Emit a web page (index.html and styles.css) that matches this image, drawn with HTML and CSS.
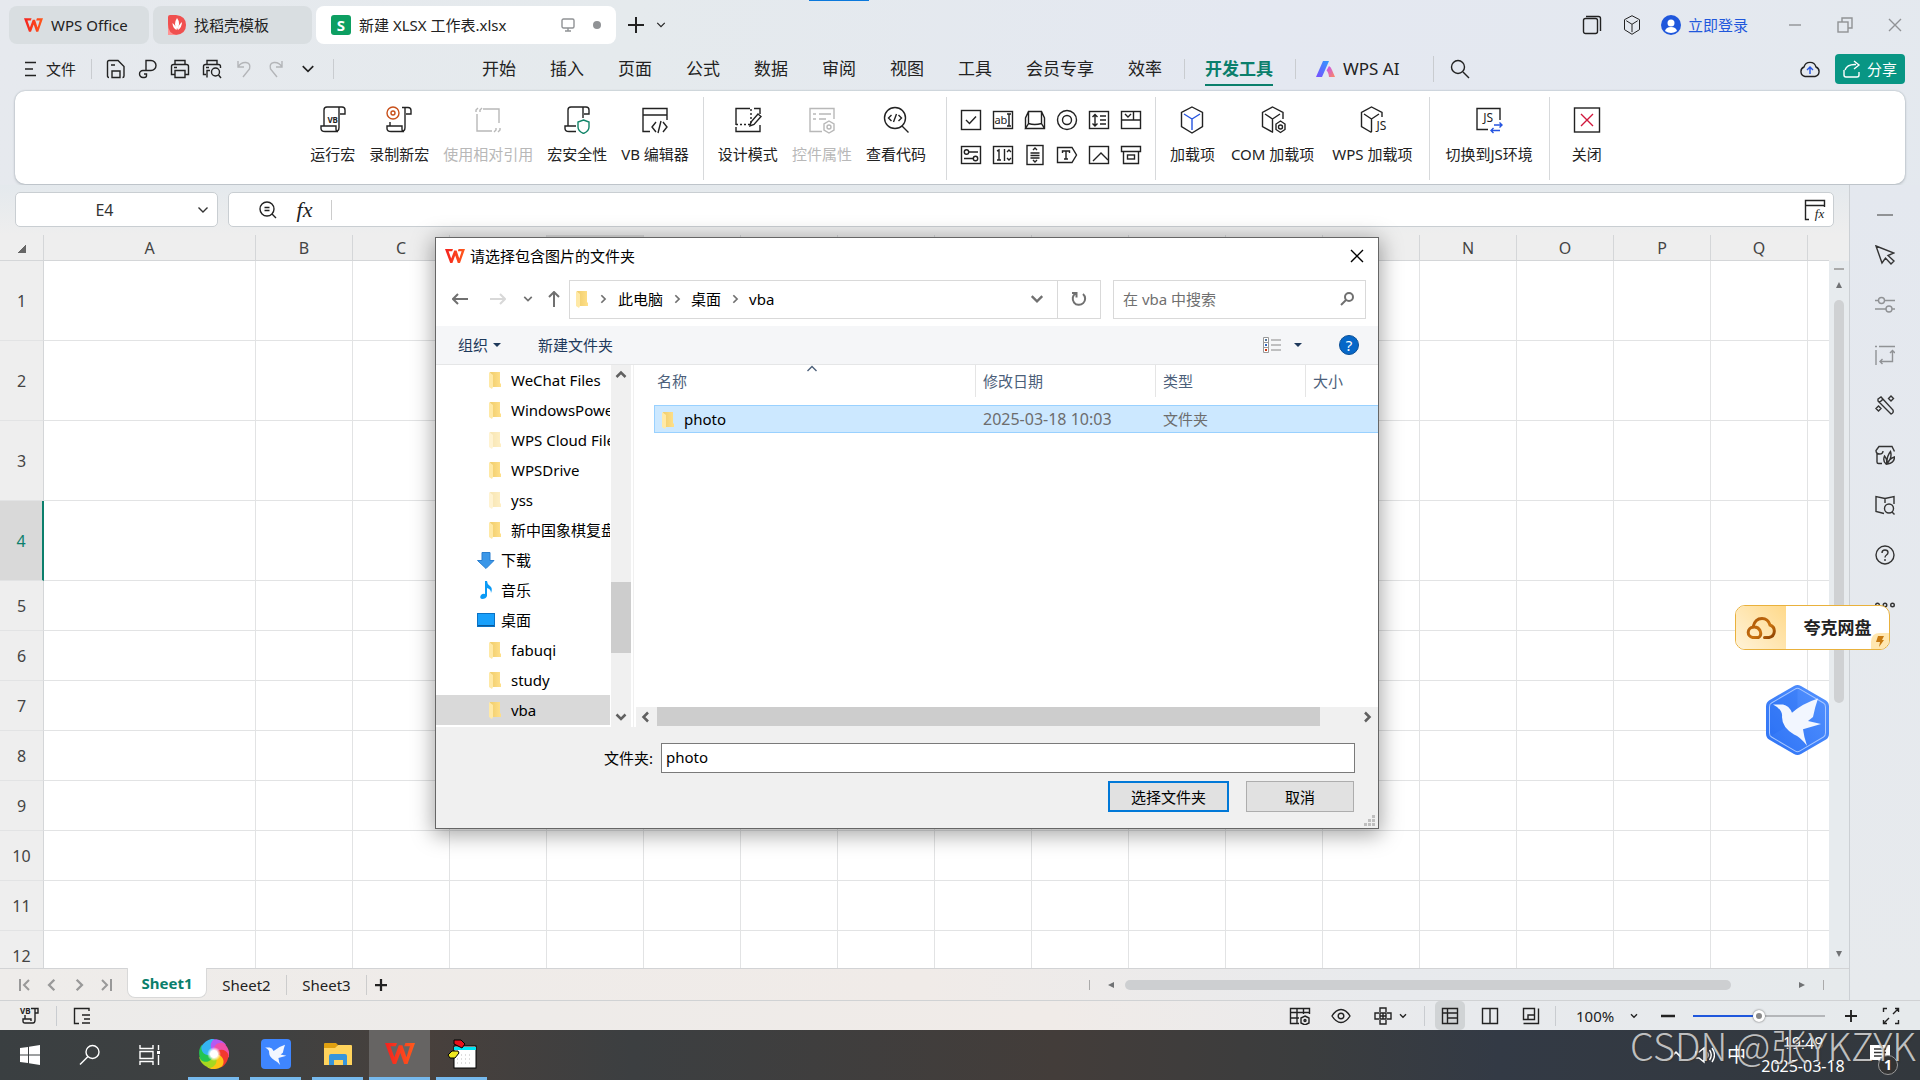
FILE: index.html
```html
<!DOCTYPE html>
<html lang="zh-CN">
	<head>
		<meta charset="UTF-8">
		<title>新建 XLSX 工作表.xlsx - WPS Office</title>
		<link rel="stylesheet" href="styles.css">
	</head>
	<body>
		<!-- 图标库 -->
		<svg class="sprite" aria-hidden="true">
			<defs>
				<linearGradient id="g-wps" x1="0" x2="1"><stop offset="0" stop-color="#f4211f"/><stop offset="1" stop-color="#ff5a1c"/></linearGradient>
				<linearGradient id="g-folder" x1="0" x2="1"><stop offset="0" stop-color="#f0cd6c"/><stop offset="1" stop-color="#ffe08a"/></linearGradient>
				<linearGradient id="g-ai" x1="0" y1="1" x2="1" y2="0"><stop offset="0" stop-color="#7a4dff"/><stop offset="1" stop-color="#2f9bff"/></linearGradient>
				<linearGradient id="g-ai2" x1="0" y1="0" x2="1" y2="1"><stop offset="0" stop-color="#c04dff"/><stop offset="1" stop-color="#ff8a5c"/></linearGradient>
				<linearGradient id="g-hex" x1="0" y1="1" x2="1" y2="0"><stop offset="0" stop-color="#2c72f5"/><stop offset="1" stop-color="#5593ff"/></linearGradient>
				<linearGradient id="g-cloud" x1="0" y1="0" x2="1" y2="1"><stop offset="0" stop-color="#a85206"/><stop offset=".6" stop-color="#c9720f"/><stop offset="1" stop-color="#8a3f00"/></linearGradient>
				<radialGradient id="g-core"><stop offset=".5" stop-color="#fff"/><stop offset="1" stop-color="#fff" stop-opacity="0"/></radialGradient>
				<path id="petal" d="M15 15C8 12 7 4 13 .5 19-.5 25 2 27 6 21 4 17 8 15 15z"/>
			</defs>
			<symbol id="i-wps" viewBox="0 0 20 14"><path d="M0 0h8l-.8 2.200H3.600L6.200 9.500 9.200 1.500h2.400l2.700 8L16.600 2.200h-3.800L13.600 0H20l-5 14h-2.200L10.200 6.600 7.400 14H5.200z" fill="url(#g-wps)"/></symbol>
			<symbol id="i-folder" viewBox="0 0 12 17"><path d="M1 0h10v11l1 1v3H4z" fill="url(#g-folder)"/><path d="M0 0l4 3v12l-1 2-3-2z" fill="#ffe9a6"/></symbol>
			<symbol id="i-chev" viewBox="0 0 12 12"><path d="M1.500 3.500L6 8l4.500-4.500"/></symbol>
			<symbol id="i-left" viewBox="0 0 12 12"><path d="M8 1.500L3.500 6 8 10.500"/></symbol>
			<symbol id="i-right" viewBox="0 0 12 12"><path d="M4 1.500L8.500 6 4 10.500"/></symbol>
			<symbol id="i-up" viewBox="0 0 12 12"><path d="M1.500 8L6 3.500 10.500 8"/></symbol>
			<symbol id="i-x" viewBox="0 0 14 14"><path d="M1 1l12 12M13 1L1 13"/></symbol>
			<symbol id="i-plus" viewBox="0 0 16 16"><path d="M8 0v16M0 8h16"/></symbol>
			<symbol id="i-cube" viewBox="0 0 24 28"><path d="M12 1l10.500 5.500v14L12 27 1.500 20.500v-14z"/><path class="inner" d="M4 8l8 5 8-5M12 13v11"/></symbol>
			<symbol id="i-scroll" viewBox="0 0 28 28"><path d="M5 20V4q0-3 3-3h15q3 0 3 3v4h-5M20 1.500v20q0 4-4 4H6q-4 0-4-3V20h15v3q0 3 2 2.500"/></symbol>
			<symbol id="i-bird" viewBox="0 0 63 68"><path d="M7 19l10 0q6 1 9 8Q36 18 52 13q-3 8-5 18l-5 4 13 3-18 5q1 8 4 16Q34 50 28 48 16 41 16 31q1-7-9-12z" fill="#f2f6ff"/></symbol>
		</svg>

		<div class="glow"></div>
		<header class="titlebar">
			<button class="doc"><svg width="19" height="14"><use href="#i-wps"/></svg>WPS Office</button>
			<button class="doc docer">
				<svg width="18" height="20" viewBox="0 0 18 20"><path d="M0 2q0-2 2-2h6q10 1 10 10T8 20H0z" fill="#f0504f"/><path d="M0 20V9q0 10 9 11z" fill="#ff9494"/><path d="M9 3q4 5 0 12-4-6 0-12zM4.500 8q3 2 4 7-4-2-4-7zM14 7q0 5-4 8 0-5 4-8z" fill="#fff"/></svg>
				找稻壳模板
			</button>
			<div class="doc current">
				<span class="s-logo">S</span>
				<span class="docname">新建 XLSX 工作表.xlsx</span>
				<svg class="ico faint" width="14" height="14" viewBox="0 0 14 14"><rect x="1" y="1" width="12" height="9" rx="1.500"/><path d="M7 10v3M4 13h6"/></svg>
				<i class="dot"></i>
			</div>
			<button class="bare add" aria-label="新建"><svg class="ico bold" width="16" height="16"><use href="#i-plus"/></svg></button>
			<button class="bare" aria-label="标签列表"><svg class="ico" width="10" height="10"><use href="#i-chev"/></svg></button>
			<div class="winctl">
				<button class="bare" aria-label="工作区"><svg class="ico" width="20" height="20" viewBox="0 0 20 20"><rect x="1.500" y="3.500" width="14" height="15" rx="2"/><path d="M4 1.500h12.500q2 0 2 2V16"/></svg></button>
				<button class="bare" aria-label="应用"><svg class="ico" width="18" height="20"><use href="#i-cube"/></svg></button>
				<button class="bare login">
					<svg width="20" height="20" viewBox="0 0 20 20"><circle cx="10" cy="10" r="10" fill="#1f57dc"/><circle cx="10" cy="8" r="3.500" fill="#fff"/><path d="M4 16q1-4 6-4t6 4q-3 2-6 2t-6-2z" fill="#fff"/></svg>
					立即登录
				</button>
				<button class="bare faint" aria-label="最小化"><svg class="ico" width="14" height="14" viewBox="0 0 14 14"><path d="M1 7h12"/></svg></button>
				<button class="bare faint" aria-label="还原"><svg class="ico" width="16" height="16" viewBox="0 0 16 16"><rect x="1" y="5" width="10" height="10"/><path d="M5 5V1h10v10h-4"/></svg></button>
				<button class="bare faint" aria-label="关闭窗口"><svg class="ico" width="14" height="14"><use href="#i-x"/></svg></button>
			</div>
		</header>

		<div class="menubar">
			<div class="quick">
				<button class="bare file"><svg class="ico" width="12" height="16" viewBox="0 0 12 16"><path d="M1 1.500h11M1 8h8M1 14.500h11"/></svg>文件</button>
				<i class="sep"></i>
				<button class="bare" aria-label="保存"><svg class="ico" width="20" height="20" viewBox="0 0 20 20"><path d="M3 18.500q-1.500 0-1.500-1.500V3q0-1.500 1.500-1.500h9l6 6V17q0 1.500-1.500 1.500M6 18.500V12h8v6.500zM5 6h4"/></svg></button>
				<button class="bare" aria-label="导出"><svg class="ico" width="20" height="20" viewBox="0 0 20 20"><path d="M8 12V1.500h5a5 5 0 010 10H5a3.200 3.200 0 000 7h1.500q2 0 2-2v-1.500H6"/></svg></button>
				<button class="bare" aria-label="打印"><svg class="ico" width="20" height="20" viewBox="0 0 20 20"><path d="M5 5.500v-4h10v4M4.500 15.500H1.500v-8q0-2 2-2h13q2 0 2 2v8h-3M5 11.500h10v7H5zM4 8.500h3"/></svg></button>
				<button class="bare" aria-label="打印预览"><svg class="ico" width="20" height="20" viewBox="0 0 20 20"><path d="M5 5.500v-4h10v4M4 15.500H1.500v-8q0-2 2-2h13q2 0 2 2V9M5 18.500v-7h3M4 8.500h3"/><circle cx="13.500" cy="13" r="4"/><path d="M16.500 16l2.500 3"/></svg></button>
				<button class="bare off" aria-label="撤销"><svg class="ico" width="20" height="20" viewBox="0 0 20 20"><path d="M4 2v6h6M4 8q3-5 8-4.500T15.500 10L9 18"/></svg></button>
				<button class="bare off" aria-label="恢复"><svg class="ico" width="20" height="20" viewBox="0 0 20 20"><path d="M16 2v6h-6M16 8q-3-5-8-4.500T4.500 10l6.500 8"/></svg></button>
				<button class="bare" aria-label="更多"><svg class="ico" width="14" height="14"><use href="#i-chev"/></svg></button>
				<i class="sep"></i>
			</div>
			<nav class="menus">
				<a href="#">开始</a><a href="#">插入</a><a href="#">页面</a><a href="#">公式</a><a href="#">数据</a><a href="#">审阅</a><a href="#">视图</a><a href="#">工具</a><a href="#">会员专享</a><a href="#">效率</a>
				<i class="sep"></i>
				<a href="#" class="on">开发工具</a>
				<i class="sep"></i>
				<a href="#" class="ai"><svg width="20" height="16" viewBox="0 0 20 16"><path d="M7 0h6L6 16H0z" fill="url(#g-ai)"/><path d="M13 5q2 1 3 4l3 7h-6q-.5-5-2.500-6.500z" fill="url(#g-ai2)"/></svg>WPS AI</a>
				<i class="sep tall"></i>
				<button class="bare" aria-label="搜索"><svg class="ico" width="20" height="20" viewBox="0 0 20 20"><circle cx="8" cy="8" r="6.500"/><path d="M13 13l6 6"/></svg></button>
			</nav>
			<button class="bare cloud" aria-label="云同步"><svg class="ico" width="20" height="20" viewBox="0 0 20 20"><path d="M5 17.500a5 5 0 01-1-9.500 6.200 6.200 0 0112 0 5 5 0 01-1 9.500z"/><path d="M10 15V8.500M7 11l3-3 3 3" stroke="#2554e0"/></svg></button>
			<button class="share"><svg class="ico" width="18" height="18" viewBox="0 0 18 18"><path d="M1 10v5q0 2 2 2h11q2 0 2-2v-3M2 10q2-6 11-5.500M11 1l5 4-5 4"/></svg>分享</button>
		</div>

		<div class="ribbon">
			<button class="tool"><span class="pic"><svg class="ico" width="28" height="28"><use href="#i-scroll"/></svg><b>VB</b></span>运行宏</button>
			<button class="tool"><svg class="ico" width="28" height="28" viewBox="0 0 28 28"><circle cx="8" cy="7" r="6" stroke="#c8501a"/><circle cx="8" cy="7" r="2" stroke="#c8501a"/><path d="M17 1.500h6q3 0 3 3V8h-5M20 1.500v20q0 4-4 4H6q-4 0-4-3V20h15v3q0 3 2 2.500M5 16v4"/></svg>录制新宏</button>
			<button class="tool" disabled><svg class="ico" width="28" height="28" viewBox="0 0 28 28"><path d="M9 3h16v14M3 8v17h15M2 6V4l2-2M6 6V4l2-2M22 22v2l-2 2M26 22v2l-2 2"/></svg>使用相对引用</button>
			<button class="tool"><svg class="ico" width="28" height="28" viewBox="0 0 28 28"><path d="M5 20V4q0-3 3-3h15q3 0 3 3v4h-5M20 1.500V12M13 25.500H6q-4 0-4-3V20h11"/><path d="M20.500 14l5.500 2v5q0 4-5.500 6.500Q15 25 15 21v-5z" stroke="#128569"/></svg>宏安全性</button>
			<button class="tool"><svg class="ico" width="28" height="28" viewBox="0 0 28 28"><path d="M9 25.500H2V2.500h24V14M2 9h24M15 16l-4 5 4 5M22 16l4 5-4 5M20 15l-3 12"/></svg>VB 编辑器</button>
			<i class="rule"></i>
			<button class="tool"><svg class="ico" width="28" height="28" viewBox="0 0 28 28"><path d="M2 19V2.500h14M20 2.500h6V8M2 21v4.500h24V19"/><path d="M17 3v16M2 18.500h14" stroke-dasharray="2 2"/><path d="M24 8l3 2.500-7 8-4 1.500 1-4z"/></svg>设计模式</button>
			<button class="tool" disabled><svg class="ico" width="28" height="28" viewBox="0 0 28 28"><path d="M14 25.500H2V2.500h24V13M5 8h3M11 8h12M5 13h3M11 13h7"/><path d="M21 15l5 3v6l-5 3-5-3v-6z"/><circle cx="21" cy="21" r="2"/></svg>控件属性</button>
			<button class="tool"><svg class="ico" width="28" height="28" viewBox="0 0 28 28"><circle cx="13" cy="12" r="10.500"/><path d="M20 20l6.500 6.500M9.500 9l-3 3 3 3M16.500 9l3 3-3 3M14.500 8l-3 8"/></svg>查看代码</button>
			<i class="rule apart"></i>
			<div class="controls">
				<button class="bare" aria-label="复选框"><svg class="ico" width="22" height="22" viewBox="0 0 22 22"><rect x="1.500" y="1.500" width="19" height="19"/><path d="M6 11l3.500 3.500L16 7.500"/></svg></button>
				<button class="bare" aria-label="文本框"><span class="pic small"><svg class="ico" width="22" height="22" viewBox="0 0 22 22"><rect x="1.500" y="2.500" width="19" height="17"/><path d="M15 5h4M17 5v12M15 17h4"/></svg><b>ab</b></span></button>
				<button class="bare" aria-label="命令按钮"><svg class="ico" width="22" height="22" viewBox="0 0 22 22"><path d="M1.500 19.500V9l3-6.500h13l3 6.500v10.500h-19l3-5V3M17.500 3v11.500l3 5M4.500 14.500q6 2 13 0"/></svg></button>
				<button class="bare" aria-label="选项按钮"><svg class="ico" width="22" height="22" viewBox="0 0 22 22"><circle cx="11" cy="11" r="9.500"/><circle cx="11" cy="11" r="4.500"/></svg></button>
				<button class="bare" aria-label="列表框"><svg class="ico" width="22" height="22" viewBox="0 0 22 22"><rect x="1.500" y="2.500" width="19" height="17"/><path d="M7 6v11M4.500 8L7 5.500 9.500 8M4.500 14.500L7 17l2.500-2.500M12 7h6M12 11h6M12 15h6"/></svg></button>
				<button class="bare" aria-label="组合框"><svg class="ico" width="22" height="22" viewBox="0 0 22 22"><rect x="1.500" y="2.500" width="19" height="17"/><path d="M1.500 11h19M13.500 2.500V11M5 5l3 3 3-3"/></svg></button>
				<button class="bare" aria-label="切换按钮"><svg class="ico" width="22" height="22" viewBox="0 0 22 22"><rect x="1.500" y="2.500" width="19" height="17"/><circle cx="6.500" cy="8" r="2.200"/><circle cx="15.500" cy="14.500" r="2.200"/><path d="M9 8h9M4 14.500h9"/></svg></button>
				<button class="bare" aria-label="数值调节钮"><svg class="ico" width="22" height="22" viewBox="0 0 22 22"><rect x="1.500" y="2.500" width="19" height="17"/><path d="M5 7l2-1v10M5 16h4M12.500 5v12M15 8l2-2 2 2M15 14l2 2 2-2"/></svg></button>
				<button class="bare" aria-label="滚动条"><svg class="ico" width="22" height="22" viewBox="0 0 22 22"><rect x="3" y="1.500" width="16" height="19"/><path d="M9 6l2-2 2 2M9 16l2 2 2-2M6.500 9h9M6.500 11.500h9M6.500 14h9"/></svg></button>
				<button class="bare" aria-label="标签"><svg class="ico" width="22" height="22" viewBox="0 0 22 22"><path d="M1.500 3.500H16l4.500 7.500-4.500 7.500H1.500zM6.500 9V7h7v2M10 7v8M8 15h4"/></svg></button>
				<button class="bare" aria-label="图像"><svg class="ico" width="22" height="22" viewBox="0 0 22 22"><rect x="1.500" y="2.500" width="19" height="17"/><path d="M5 17l8-8 7 7"/></svg></button>
				<button class="bare" aria-label="其他控件"><svg class="ico" width="22" height="22" viewBox="0 0 22 22"><path d="M1.500 2.500h19v5h-19zM3.500 7.500h15v12h-15z"/><rect x="7.500" y="11" width="7" height="4"/></svg></button>
			</div>
			<i class="rule"></i>
			<button class="tool blue"><svg class="ico" width="28" height="28"><use href="#i-cube"/></svg>加载项</button>
			<button class="tool"><svg class="ico" width="28" height="28" viewBox="0 0 28 28"><path d="M14 26.500l-10.500-6v-14L13.500 1 24 6.500V13M6 8l7.500 5L21 8M13.500 13v13"/><path d="M21.500 15l4.500 3v5.500l-4.500 3-4.500-3V18z"/><circle cx="21.500" cy="21" r="2"/></svg>COM 加载项</button>
			<button class="tool"><span class="pic js"><svg class="ico" width="28" height="28" viewBox="0 0 28 28"><path d="M13.500 26.500L3.500 20.500v-14L13.500 1 24 6.500V11M6 8l7.500 5L21 8M13.500 13v13"/></svg><b>JS</b></span>WPS 加载项</button>
			<i class="rule"></i>
			<button class="tool"><span class="pic env"><svg class="ico" width="28" height="28" viewBox="0 0 28 28"><path d="M13 23.500H2V2.500h23V14"/><path d="M19 19h8M24.500 16.500L27 19l-2.500 2.500M25 24.500h-9M18.500 22L16 24.500l2.500 2.500" stroke="#2554e0"/></svg><b>JS</b></span>切换到JS环境</button>
			<i class="rule"></i>
			<button class="tool close"><svg class="ico" width="28" height="28" viewBox="0 0 28 28"><rect x="1.500" y="2" width="25" height="24"/><path d="M8 8l12 12M20 8L8 20" stroke="#d0173c"/></svg>关闭</button>
		</div>

		<div class="work">
			<main class="book">
				<div class="formula">
					<div class="namebox">
						<input type="text" value="E4" aria-label="名称框">
						<button class="bare" aria-label="名称列表"><svg class="ico" width="12" height="12"><use href="#i-chev"/></svg></button>
					</div>
					<div class="fxbar">
						<button class="bare" aria-label="浏览公式结果"><svg class="ico" width="20" height="20" viewBox="0 0 20 20"><circle cx="9" cy="9" r="7"/><path d="M14 14l4 4M6.500 7.500h5M6.500 10.500h5"/></svg></button>
						<button class="bare fx">fx</button>
						<input type="text" aria-label="编辑栏">
						<button class="bare" aria-label="插入函数"><span class="pic fn"><svg class="ico" width="22" height="22" viewBox="0 0 22 22"><path d="M5 20.500H1.500v-19h19V8M1.500 6.500h19"/></svg><b>fx</b></span></button>
					</div>
				</div>
				<div class="gridwrap">
					<div class="gridclip">
						<table class="grid"></table>
					</div>
					<div class="vscroll"><i class="grip"></i><i class="tri up"></i><i class="thumb"></i><i class="tri down"></i></div>
				</div>
				<div class="sheets">
					<div class="steps">
						<button class="bare" aria-label="第一张"><svg class="ico" width="14" height="14" viewBox="0 0 14 14"><path d="M2 1v12M11 2L6 7l5 5"/></svg></button>
						<button class="bare" aria-label="上一张"><svg class="ico" width="14" height="14"><use href="#i-left"/></svg></button>
						<button class="bare" aria-label="下一张"><svg class="ico" width="14" height="14"><use href="#i-right"/></svg></button>
						<button class="bare" aria-label="最后一张"><svg class="ico" width="14" height="14" viewBox="0 0 14 14"><path d="M12 1v12M3 2l5 5-5 5"/></svg></button>
					</div>
					<button class="sheet on">Sheet1</button>
					<button class="sheet">Sheet2</button>
					<button class="sheet">Sheet3</button>
					<button class="bare plus" aria-label="新建工作表"><svg class="ico" width="12" height="12"><use href="#i-plus"/></svg></button>
					<div class="hscroll"><i class="bar"></i><i class="tri left"></i><span class="track"><i class="thumb"></i></span><i class="tri right"></i><i class="bar"></i></div>
				</div>
			</main>
			<aside class="side">
				<button class="bare faint" aria-label="收起"><svg class="ico bold" width="20" height="20" viewBox="0 0 20 20"><path d="M2 10h16"/></svg></button>
				<button class="bare" aria-label="选择"><svg class="ico" width="20" height="20" viewBox="0 0 20 20"><path d="M1 1l18 7-6 2.500 6 5.500-3 3-5.500-6L7 18z"/></svg></button>
				<button class="bare faint" aria-label="属性"><svg class="ico" width="20" height="20" viewBox="0 0 20 20"><circle cx="6.500" cy="5.500" r="3"/><circle cx="14" cy="14" r="3"/><path d="M0 5.500h3.500M9.500 5.500H20M0 14h11M17 14h3"/></svg></button>
				<button class="bare faint" aria-label="切换"><svg class="ico" width="20" height="20" viewBox="0 0 20 20"><path d="M4 1.500h16M1 5v15M0 1.500h2M17.500 6v10.500H5M15 8l2.500-2.500L20 8M7.500 14L5 16.500 7.500 19"/></svg></button>
				<button class="bare" aria-label="智能美化"><svg class="ico" width="20" height="20" viewBox="0 0 20 20"><path d="M3 4l3-2 12 13q1 3-2 4L3 6zM4 8l4-4M16 1l2.500 2.500L16 6l-2.500-2.500zM3.500 11L6 13.500 3.500 16 1 13.500z"/></svg></button>
				<button class="bare" aria-label="稻壳资源"><svg class="ico" width="20" height="20" viewBox="0 0 20 20"><path d="M2 8v9q0 1.500 1.500 1.500H7M8 6q0 3-3.500 3T1 5.500L4 1.500h13l2.500 5M9.500 11q3.500 4 1.500 8-3.500-3-1.500-8zM15.500 6.500q2 6-3.500 12-.5-7 3.500-12zM19.500 12q0 6-7 7 1-5 7-7z"/></svg></button>
				<button class="bare" aria-label="词典"><svg class="ico" width="20" height="20" viewBox="0 0 20 20"><path d="M19 9V1.500l-9 2-9-2v15l8 2M10 3.500V8"/><circle cx="14" cy="13.500" r="4.500"/><path d="M17 17l2.500 2.500"/></svg></button>
				<button class="bare" aria-label="帮助"><svg class="ico" width="20" height="20" viewBox="0 0 20 20"><circle cx="10" cy="10" r="9"/><path d="M7 8q0-3 3-3t3 2.500q0 1.500-1.500 2.500T10 12.500M10 14v2"/></svg></button>
				<button class="bare" aria-label="更多工具"><svg class="ico" width="20" height="20" viewBox="0 0 20 20"><circle cx="2.500" cy="10" r="1.800"/><circle cx="10" cy="10" r="1.800"/><circle cx="17.500" cy="10" r="1.800"/></svg></button>
			</aside>
		</div>

		<footer class="status">
			<button class="bare macro" aria-label="宏"><span class="pic vb"><svg class="ico" width="18" height="18" viewBox="0 0 18 18"><path d="M10 1.500h7V6h-3M14 1.500V13q0 3-2 3H4q-2 0-2-2v-2h8v2M4 8v4"/></svg><b>VB</b></span></button>
			<i class="sep"></i>
			<button class="bare" aria-label="面板"><svg class="ico" width="18" height="18" viewBox="0 0 18 18"><path d="M16 4V1.500H1.500v15H6M9 8h8M11 12h6M9 16h8"/></svg></button>
			<div class="views">
				<button class="bare" aria-label="表格设置"><svg class="ico" width="22" height="18" viewBox="0 0 22 18"><path d="M10 16.500H1.500v-15h19V7M1.500 5.500h19M1.500 11H10M8 1.500v15M14.500 1.500V7M16 9l4 2v5l-4 2-4-2v-5z"/><circle cx="16" cy="13.500" r="1"/></svg></button>
				<button class="bare" aria-label="护眼模式"><svg class="ico" width="20" height="18" viewBox="0 0 20 18"><path d="M1 9q4-6.500 9-6.500T19 9q-4 6.500-9 6.500T1 9z"/><circle cx="10" cy="9" r="2.800"/></svg></button>
				<button class="bare focus" aria-label="阅读模式"><svg class="ico" width="18" height="18" viewBox="0 0 18 18"><path d="M6 5V1h6v4M6 13v4h6v-4M5 6H1v6h4M13 6h4v6h-4M6 6h6v6H6zM9 6v6M6 9h6"/></svg><svg class="ico bold" width="8" height="8"><use href="#i-chev"/></svg></button>
				<i class="sep"></i>
				<button class="bare on" aria-label="普通视图"><svg class="ico" width="18" height="18" viewBox="0 0 18 18"><path d="M1.500 1.500h15v15h-15zM1.500 6h15M6.500 1.500v15M6.500 11h10"/></svg></button>
				<button class="bare" aria-label="分页预览"><svg class="ico" width="18" height="18" viewBox="0 0 18 18"><path d="M1.500 1.500h15v15h-15zM9 1.500v15"/></svg></button>
				<button class="bare" aria-label="页面布局"><svg class="ico" width="18" height="18" viewBox="0 0 18 18"><path d="M1.500 1.500h11v11h-11zM16.500 1.500v15h-15M6 12V8h6"/></svg></button>
				<i class="sep"></i>
				<select class="zoom" aria-label="缩放比例"><option>100%</option></select>
				<svg class="ico bold" width="8" height="8"><use href="#i-chev"/></svg>
				<button class="bare minus" aria-label="缩小"><svg class="ico heavy" width="14" height="14" viewBox="0 0 14 14"><path d="M0 7h14"/></svg></button>
				<input class="slider" type="range" min="0" max="100" value="50" aria-label="缩放">
				<button class="bare" aria-label="放大"><svg class="ico heavy" width="12" height="12"><use href="#i-plus"/></svg></button>
				<button class="bare full" aria-label="全屏"><svg class="ico" width="18" height="18" viewBox="0 0 18 18"><path d="M1.500 5V1.500H5M13 1.500h3.500V5M1.500 13v3.500H5M13 16.500h3.500V13M11 7l5-5M7 11l-5 5"/></svg></button>
			</div>
		</footer>

		<div class="taskbar">
			<button class="start" aria-label="开始菜单"><svg width="20" height="20" viewBox="0 0 20 20"><path d="M0 3l8-1v7.500H0zM9 1.800L20 0v9.500H9zM0 10.500h8V18l-8-1zM9 10.500h11V20L9 18.200z" fill="#fff"/></svg></button>
			<button class="start" aria-label="任务栏搜索"><svg class="ico" width="22" height="22" viewBox="0 0 22 22"><circle cx="13.500" cy="8" r="6.500"/><path d="M9 12.500l-8 8"/></svg></button>
			<button class="start" aria-label="任务视图"><svg class="ico" width="22" height="20" viewBox="0 0 22 20"><path d="M1 0v3.500h13V0M1 20v-3.500h13V20M1 6.500h13v7H1zM19.500 0v5M19.500 10v10"/><rect x="18" y="6" width="3" height="3" fill="#fff" stroke="none"/></svg></button>
			<button class="app" aria-label="浏览器">
				<svg width="30" height="30" viewBox="0 0 30 30"><use href="#petal" fill="#b45af2"/><use href="#petal" fill="#f04fa8" transform="rotate(51 15 15)"/><use href="#petal" fill="#f2382e" transform="rotate(103 15 15)"/><use href="#petal" fill="#ffc414" transform="rotate(154 15 15)"/><use href="#petal" fill="#a8d820" transform="rotate(206 15 15)"/><use href="#petal" fill="#23c552" transform="rotate(257 15 15)"/><use href="#petal" fill="#35b5f2" transform="rotate(309 15 15)"/><circle cx="15" cy="15" r="7" fill="url(#g-core)"/></svg>
			</button>
			<button class="app" aria-label="迅雷"><svg width="30" height="30" viewBox="0 0 30 30"><rect width="30" height="30" rx="4" fill="#3f86ff"/><use href="#i-bird" x="1" y="0" width="28" height="30"/></svg></button>
			<button class="app" aria-label="资源管理器"><svg width="28" height="24" viewBox="0 0 28 24"><path d="M0 2q0-1 1-1h11l2 2-2 3H0z" fill="#e0a010"/><path d="M14 3h13q1 0 1 1v19H0V6h11z" fill="#ffd35c"/><path d="M5 23V14q0-2 2-2h14q2 0 2 2v9h-4v-5h-9v5z" fill="#3795dc"/></svg></button>
			<button class="app active" aria-label="WPS"><svg width="30" height="21"><use href="#i-wps"/></svg></button>
			<button class="app" aria-label="工作簿"><svg width="30" height="30" viewBox="0 0 30 30"><rect x="7" y="7" width="22" height="22" fill="#fff" stroke="#000"/><path d="M7 8h22v3H7z" fill="#00e5f5"/><path d="M10 16h16M10 20h16M10 24h16" stroke="#bbb" stroke-dasharray="1 3"/><path d="M7 1h7l4 4-3 4-8-4z" fill="#e8101a" stroke="#000"/><path d="M1 16l4-4h6l1 2-4 5H3z" fill="#f0e820" stroke="#000"/></svg></button>
			<div class="tray">
				<svg class="ico" width="14" height="14"><use href="#i-up"/></svg>
				<svg class="ico" width="20" height="18" viewBox="0 0 20 18"><path d="M1 6h3l5-4v14l-5-4H1zM12 6q2 3 0 6M14.500 4q3.500 5 0 10M17 2q5 7 0 14"/></svg>
				<span class="ime">中</span>
				<time>19:49<br>2025-03-18</time>
				<span class="notice"><svg width="20" height="20" viewBox="0 0 20 20"><path d="M0 0h20v15H12v4l-4-4H0z" fill="#fff"/><path d="M4 4h12M4 7.500h12M4 11h8" stroke="#333" stroke-width="1.500"/></svg><b>1</b></span>
			</div>
		</div>

		<!-- 选择文件夹对话框 -->
		<section class="dialog" role="dialog" aria-label="请选择包含图片的文件夹">
			<div class="caption">
				<svg width="20" height="14"><use href="#i-wps"/></svg>
				<h1>请选择包含图片的文件夹</h1>
				<button class="bare" aria-label="关闭对话框"><svg class="ico" width="14" height="14"><use href="#i-x"/></svg></button>
			</div>
			<div class="navrow">
				<button class="bare" aria-label="后退"><svg class="ico bold" width="16" height="16" viewBox="0 0 16 16"><path d="M1 8h15M6 3L1 8l5 5"/></svg></button>
				<button class="bare dim" aria-label="前进"><svg class="ico bold" width="16" height="16" viewBox="0 0 16 16"><path d="M0 8h15M10 3l5 5-5 5"/></svg></button>
				<button class="bare" aria-label="最近位置"><svg class="ico bold" width="10" height="10"><use href="#i-chev"/></svg></button>
				<button class="bare" aria-label="上移"><svg class="ico bold" width="16" height="16" viewBox="0 0 16 16"><path d="M8 1v15M3 6l5-5 5 5"/></svg></button>
				<div class="address">
					<svg width="12" height="17"><use href="#i-folder"/></svg>
					<svg class="ico bold" width="12" height="10"><use href="#i-right"/></svg>
					<button class="crumb">此电脑</button>
					<svg class="ico bold" width="10" height="10"><use href="#i-right"/></svg>
					<button class="crumb">桌面</button>
					<svg class="ico bold" width="10" height="10"><use href="#i-right"/></svg>
					<button class="crumb">vba</button>
					<button class="bare drop" aria-label="展开地址"><svg class="ico bold" width="14" height="14"><use href="#i-chev"/></svg></button>
					<button class="bare reload" aria-label="刷新"><svg class="ico bold" width="16" height="16" viewBox="0 0 16 16"><path d="M12 3a6.200 6.200 0 11-7.500-.5M1 2h4.500v4.500"/></svg></button>
				</div>
				<div class="search">
					<input type="text" placeholder="在 vba 中搜索" aria-label="搜索文件夹">
					<svg class="ico bold" width="14" height="14" viewBox="0 0 14 14"><circle cx="9" cy="5" r="4"/><path d="M6 8l-5 5"/></svg>
				</div>
			</div>
			<div class="toolrow">
				<button class="bare">组织<i class="caret"></i></button>
				<button class="bare">新建文件夹</button>
				<button class="bare view" aria-label="更改视图"><svg width="18" height="16" viewBox="0 0 18 16"><path d="M.5.5h5v15h-5zM.5 5.500h5M.5 10.500h5" fill="#fff" stroke="#999"/><path d="M8 3h10M8 8h10M8 13h10" stroke="#888"/><path d="M2 2h2v2H2z" fill="#579"/><path d="M2 7h2v2H2z" fill="#36b"/><path d="M2 12h2v2H2z" fill="#c31"/></svg><i class="caret"></i></button>
				<button class="help" aria-label="获取帮助">?</button>
			</div>
			<div class="panes">
				<ul class="tree">
					<li><svg width="12" height="17"><use href="#i-folder"/></svg>WeChat Files</li>
					<li><svg width="12" height="17"><use href="#i-folder"/></svg>WindowsPowerShell</li>
					<li class="hid"><svg width="12" height="17"><use href="#i-folder"/></svg>WPS Cloud Files</li>
					<li><svg width="12" height="17"><use href="#i-folder"/></svg>WPSDrive</li>
					<li class="hid"><svg width="12" height="17"><use href="#i-folder"/></svg>yss</li>
					<li><svg width="12" height="17"><use href="#i-folder"/></svg>新中国象棋复盘</li>
					<li class="top"><svg width="18" height="17" viewBox="0 0 18 17"><path d="M5 .5h8v8h4L9 16.500.5 8.500H5z" fill="#3b97e8" stroke="#2a7fd0"/></svg>下载</li>
					<li class="top"><svg width="18" height="18" viewBox="0 0 18 18"><path d="M8 0h2q0 3 3 5t1 7q0-4-4-5v8q-1 3-5 3-3-1-1-4 2-2 4-1z" fill="#0a9af5"/></svg>音乐</li>
					<li class="top"><svg width="18" height="14" viewBox="0 0 18 14"><rect x=".5" y=".5" width="17" height="13" fill="#18a0fb" stroke="#0a72c4"/><path d="M1 12.500h16" stroke="#0a5a9c"/></svg>桌面</li>
					<li><svg width="12" height="17"><use href="#i-folder"/></svg>fabuqi</li>
					<li><svg width="12" height="17"><use href="#i-folder"/></svg>study</li>
					<li class="sel"><svg width="12" height="17"><use href="#i-folder"/></svg>vba</li>
				</ul>
				<div class="treebar">
					<svg class="ico heavy" width="12" height="12"><use href="#i-up"/></svg>
					<i class="thumb"></i>
					<svg class="ico heavy" width="12" height="12"><use href="#i-chev"/></svg>
				</div>
				<div class="listing">
					<table class="files">
						<thead>
							<tr><th class="c-name">名称<svg class="ico" width="12" height="12"><use href="#i-up"/></svg></th><th class="c-date">修改日期</th><th class="c-type">类型</th><th>大小</th></tr>
						</thead>
						<tbody>
							<tr><td><svg width="12" height="17"><use href="#i-folder"/></svg>photo</td><td class="when">2025-03-18 10:03</td><td>文件夹</td><td></td></tr>
						</tbody>
					</table>
					<div class="listbar">
						<svg class="ico heavy" width="12" height="12"><use href="#i-left"/></svg>
						<i class="thumb"></i>
						<svg class="ico heavy" width="12" height="12"><use href="#i-right"/></svg>
					</div>
				</div>
			</div>
			<div class="confirm">
				<div class="field">
					<label for="folder">文件夹:</label>
					<input id="folder" type="text" value="photo">
				</div>
				<div class="buttons">
					<button class="ok">选择文件夹</button>
					<button class="cancel">取消</button>
				</div>
				<svg class="sizer" width="11" height="11" viewBox="0 0 11 11"><path d="M8 0h3v3H8zM4 4h3v3H4zM8 4h3v3H8zM0 8h3v3H0zM4 8h3v3H4zM8 8h3v3H8z" fill="#bfbfbf"/></svg>
			</div>
		</section>

		<button class="quark">
			<span class="q-icon"><svg width="30" height="24" viewBox="0 0 30 24" fill="none" stroke="url(#g-cloud)" stroke-width="3" stroke-linecap="round"><path d="M8 21.500H6.500a5.200 5.200 0 01.5-10.300q5-.700 7 3.300 2 5-1.500 7H8M7 11q2-8.500 9-8.500 6 0 8 6.500a6.500 6.500 0 01-1 12.500h-4.500"/></svg></span>
			<span class="q-name">夸克网盘</span>
			<svg class="q-bolt" width="18" height="16" viewBox="0 0 18 16"><path d="M0 16V9q0-9 9-9h9v10q0 6-6 6z" fill="#ffe7b0"/><path d="M7 3h6l-2 4h2l-5 7 1-5H5z" fill="#c87a10"/></svg>
		</button>
		<button class="hummer" aria-label="迅雷悬浮窗">
			<svg width="63" height="70" viewBox="0 0 63 68" preserveAspectRatio="none"><path d="M28 1q3.500-2 7 0l25 14q3 2 3 6v26q0 4-3 6L35 67q-3.500 2-7 0L3 53q-3-2-3-6V21q0-4 3-6z" fill="url(#g-hex)"/><path d="M29 4q2.500-1.500 5 0l23.500 13.500q2 1 2 4v25q0 3-2 4L34 64q-2.500 1.500-5 0L5.500 50.500q-2-1-2-4v-25q0-3 2-4z" fill="none" stroke="#a9c8ff"/><path d="M31.500 4v30L4 50V19z" fill="#1f66f0" opacity=".25"/><use href="#i-bird" width="63" height="68"/></svg>
		</button>
		<div class="mark">CSDN @张YKZYK</div>

		<script type="text/javascript">
			"use strict";

			{
				const grid = document.querySelector(".grid");
				const columns = [..."ABCDEFGHIJKLMNOPQ", ""];

				// 列标
				const head = grid.createTHead().insertRow();
				for(const name of ["", ...columns]) {
					const th = document.createElement("th");
					th.textContent = name;
					if(name === "A") th.className = "wide";
					if(name === "E") th.className = "on";
					head.append(th);
				};
				head.firstChild.className = "corner";

				// 前四行较高
				const body = grid.createTBody();
				for(let index = 1; index <= 12; index++) {
					const row = body.insertRow();
					const th = document.createElement("th");
					th.textContent = index;
					row.append(th);
					columns.forEach(() => row.insertCell());
					if(index <= 4) row.className = "high";
					if(index === 4) row.classList.add("on");
				};
			};
		</script>
	</body>
</html>
```
FILE: styles.css
```css
* {
	box-sizing: border-box;
}
html, body {
	padding: 0px;
	margin: 0px;
	height: 100%;
}
body {
	display: flex;
	flex-direction: column;
	position: relative;
	overflow: hidden;
	font-family: "Noto Sans", "Noto Sans CJK SC", sans-serif;
	font-size: 15px;
	line-height: 20px;
	color: #222;
	background: linear-gradient(100deg, #e6e9ee, #e5eaed 30%, #e4e8f1 60%, #e4e9ee);
}
button, input, select {
	font: inherit;
	color: inherit;
	padding: 0px;
	margin: 0px;
}
button {
	white-space: nowrap;
}
svg {
	display: block;
	flex: none;
}
.sprite {
	position: absolute;
	width: 0px;
	height: 0px;
}
.ico {
	fill: none;
	stroke: currentColor;
	stroke-width: 1.4;
}
.ico.bold {
	stroke-width: 2;
}
.ico.heavy {
	stroke-width: 2.5;
}
.inner {
	stroke: var(--inner);
}
.bare {
	display: flex;
	align-items: center;
	justify-content: center;
	background: none;
	border: none;
}
.faint {
	color: #909295;
}
.off {
	color: #b3b5b8;
}
.sep {
	flex: none;
	width: 1px;
	height: 20px;
	background-color: #c9ccd0;
}
.glow {
	position: absolute;
	top: 0px;
	left: 809px;
	width: 60px;
	height: 1px;
	background-color: #0a78dc;
}

/* 标题栏 */
.titlebar {
	display: flex;
	align-items: center;
	flex: none;
	height: 50px;
	padding: 0px 18px 0px 9px;
}
.doc {
	display: flex;
	align-items: center;
	gap: 8px;
	width: 140px;
	height: 38px;
	margin-right: 4px;
	padding: 0px 15px;
	border: none;
	border-radius: 8px;
	background-color: #d9dee1;
}
.doc.docer {
	width: 159px;
}
.doc.current {
	width: 300px;
	background-color: #fff;
}
.docname {
	flex: 1;
	white-space: nowrap;
}
.s-logo {
	width: 20px;
	height: 20px;
	border-radius: 3px;
	background-color: #0d9f62;
	color: #fff;
	font-weight: bold;
	text-align: center;
}
.dot {
	width: 8px;
	height: 8px;
	margin-left: 10px;
	border-radius: 50%;
	background-color: #909295;
}
.add {
	margin: 0px 12px 0px 8px;
}
.winctl {
	display: flex;
	align-items: center;
	margin-left: auto;
}
.winctl .bare {
	width: 50px;
}
.winctl .bare:nth-child(-n+2) {
	width: 40px;
}
.winctl .bare:last-child {
	width: auto;
	padding-left: 18px;
}
.winctl .login {
	gap: 7px;
	width: auto;
	padding: 0px 22px 0px 9px;
	color: #1f57dc;
}

/* 菜单栏 */
.menubar {
	display: flex;
	align-items: center;
	flex: none;
	height: 41px;
	padding: 0px 15px 4px 23px;
}
.quick {
	display: flex;
	align-items: center;
	width: 459px;
}
.quick .bare {
	width: 32px;
}
.quick .file {
	gap: 10px;
	width: 54px;
}
.quick .sep:nth-of-type(1) {
	margin: 0px 8px 0px 14px;
}
.quick .sep:last-child {
	margin-left: 9px;
}
.menus {
	display: flex;
	align-items: center;
	flex: 1;
	gap: 34px;
	font-size: 17px;
	line-height: 24px;
}
.menus a {
	color: #222;
	text-decoration: none;
	white-space: nowrap;
}
.menus .sep {
	margin: 0px -14px 0px -12px;
}
.menus .sep.tall {
	height: 26px;
	margin: 0px -18px 0px 0px;
}
.menus .on {
	position: relative;
	color: #0b7f6c;
	font-weight: bold;
}
.menus .on::after {
	content: "";
	position: absolute;
	left: 0px;
	right: 0px;
	bottom: -5px;
	height: 2px;
	background-color: #0b7f6c;
}
.menus .ai {
	display: flex;
	align-items: center;
	gap: 7px;
}
.cloud {
	margin-right: 15px;
}
.share {
	display: flex;
	align-items: center;
	justify-content: center;
	gap: 6px;
	width: 70px;
	height: 30px;
	border: none;
	border-radius: 4px;
	background-color: #089684;
	color: #fff;
}

/* 功能区 */
.ribbon {
	display: flex;
	justify-content: center;
	flex: none;
	gap: 14px;
	height: 93px;
	margin: 0px 15px;
	padding: 6px 0px 4px;
	border-radius: 10px;
	background-color: #fff;
	box-shadow: 0px 0px 2px #9aa4ac, 0px 2px 3px #c8cdd2;
}
.tool {
	display: flex;
	flex-direction: column;
	align-items: center;
	gap: 10px;
	padding: 9px 0px 0px;
	border: none;
	background: none;
}
.tool:disabled {
	color: #b8b8b8;
}
.blue {
	--inner: #2554e0;
}
.blue ~ .tool {
	padding: 9px 2px 0px;
}
.tool.close {
	min-width: 46px;
}
.rule {
	width: 1px;
	background-color: #d7d9db;
}
.rule.apart {
	margin-left: 6px;
}
/* 图形与文字叠放 */
.pic {
	display: grid;
	place-items: center;
}
.pic > * {
	grid-area: 1 / 1;
}
.pic b {
	font-size: 8px;
	line-height: 8px;
}
.pic.small b {
	padding-right: 4px;
	font-size: 11px;
	font-weight: normal;
	line-height: 12px;
}
.pic.js b {
	padding: 12px 0px 0px 18px;
	font-size: 12px;
	font-weight: normal;
	line-height: 12px;
}
.pic.env b {
	padding: 0px 2px 4px 0px;
	font-size: 12px;
	font-weight: normal;
	line-height: 12px;
}
.pic.fn b {
	padding: 8px 0px 0px 9px;
	font: italic 13px "Liberation Serif", serif;
	line-height: 12px;
}
.pic.vb b {
	padding: 0px 10px 10px 0px;
}
.controls {
	display: grid;
	grid-template-columns: repeat(6, 32px);
	grid-template-rows: 35px 35px;
	margin: 5px -6px 0px;
}

/* 编辑区 */
.work {
	display: flex;
	flex: 1;
	min-height: 0px;
	margin-top: 1px;
}
.book {
	display: flex;
	flex-direction: column;
	flex: 1;
	min-width: 0px;
	background: linear-gradient(#e4e9ed, #eeeeee 50px);
}
.formula {
	display: flex;
	gap: 10px;
	flex: none;
	height: 50px;
	padding: 7px 15px 8px 15px;
}
.namebox, .fxbar {
	display: flex;
	align-items: center;
	border: 1px solid #c9ced2;
	border-radius: 5px;
	background-color: #fff;
}
.namebox {
	width: 203px;
	padding-right: 8px;
	color: #333;
}
.namebox input {
	flex: 1;
	min-width: 0px;
	padding-right: 4px;
	border: none;
	background: none;
	font-size: 16px;
	text-align: center;
}
.fxbar {
	flex: 1;
	padding: 0px 7px 0px 29px;
}
.fxbar .fx {
	width: 53px;
	font: italic 22px "Liberation Serif", serif;
}
.fxbar input {
	flex: 1;
	height: 20px;
	border: none;
	border-left: 1px solid #ccc;
}
.gridwrap {
	display: flex;
	flex: 1;
	min-height: 0px;
}
.gridclip {
	flex: 1;
	min-width: 0px;
	overflow: hidden;
}
.grid {
	table-layout: fixed;
	width: 100%;
	border-spacing: 0px;
	font-size: 16px;
	color: #444;
}
.grid th, .grid td {
	height: 50px;
	padding: 0px;
	border-right: 1px solid #e2e3e4;
	border-bottom: 1px solid #e2e3e4;
	font-weight: normal;
}
.grid td {
	background-color: #fff;
}
.grid th {
	background-color: #eee;
}
.grid thead th {
	width: 97px;
	height: 26px;
	border-color: #d4d6d8;
}
.grid thead th.wide {
	width: 212px;
}
.grid thead th.corner {
	width: 44px;
	background: linear-gradient(135deg, transparent 50%, #666 50%) 18px 10px / 8px 8px no-repeat;
}
.grid tbody th {
	border-right-color: #d4d6d8;
}
.grid thead th:last-child {
	width: auto;
}
.grid tr > :last-child {
	border-right: none;
}
.grid .high > * {
	height: 80px;
}
.grid thead th.on, .grid tbody .on th {
	background-color: #d9d9d9;
}
.grid tbody .on th {
	border-right: 2px solid #0b7f6c;
	color: #0b7f6c;
}
.vscroll {
	display: flex;
	flex-direction: column;
	align-items: center;
	width: 20px;
	margin-top: 26px;
	padding: 7px 0px 8px;
	background-color: #e7ebee;
}
.vscroll .grip {
	width: 10px;
	height: 2px;
	background-color: #aaa;
}
.vscroll .thumb {
	width: 10px;
	height: 403px;
	margin: 12px 0px auto;
	border-radius: 5px;
	background-color: #cfd1d3;
}
.tri {
	flex: none;
	width: 0px;
	height: 0px;
	border: 3px solid transparent;
}
.tri.up {
	margin-top: 9px;
	border-bottom: 6px solid #707274;
}
.tri.down {
	border-top: 6px solid #707274;
}
.tri.left {
	border-right: 6px solid #707274;
}
.tri.right {
	border-left: 6px solid #707274;
}

/* 工作表标签 */
.sheets {
	display: flex;
	align-items: center;
	flex: none;
	height: 32px;
	border-top: 1px solid #d2d3d5;
	background: linear-gradient(90deg, #eeecea, #f0ebe8 50%, #e8eaed 75%, #e6eaec);
}
.steps {
	display: flex;
	width: 127px;
	padding-left: 11px;
	color: #999;
}
.steps .bare {
	width: 27px;
}
.steps .ico {
	stroke-width: 2;
}
.sheet {
	width: 80px;
	height: 20px;
	border: none;
	border-right: 1px solid #ccc;
	background: none;
	line-height: 18px;
}
.sheet.on {
	align-self: flex-start;
	height: 30px;
	margin-top: -1px;
	border: 1px solid #d8d8d8;
	border-top: none;
	border-radius: 0px 0px 8px 8px;
	background-color: #fff;
	color: #0b7f6c;
	font-weight: bold;
}
.plus {
	margin-left: 8px;
}
.plus .ico {
	stroke-width: 3;
}
.hscroll {
	display: flex;
	align-items: center;
	gap: 15px;
	flex: none;
	width: 735px;
	margin-left: auto;
	margin-right: 25px;
}
.hscroll .bar {
	width: 1px;
	height: 10px;
	background-color: #aaa;
}
.hscroll .track {
	flex: 1;
	margin-left: -4px;
}
.hscroll .track .thumb {
	display: block;
	width: 92%;
	height: 10px;
	border-radius: 5px;
	background-color: #cdcfd1;
}

/* 侧栏 */
.side {
	display: flex;
	flex-direction: column;
	width: 71px;
	padding-top: 20px;
	border-left: 1px solid #ccd0d4;
	background: linear-gradient(#e4e8ef, #e7eaed);
	color: #333;
}
.side .bare {
	height: 50px;
}
.side .bare:first-child {
	height: 20px;
	margin-bottom: 5px;
}

/* 状态栏 */
.status {
	display: flex;
	align-items: center;
	flex: none;
	height: 30px;
	padding: 0px 20px;
	border-top: 1px solid #d0d2d4;
	background: linear-gradient(90deg, #ecebea, #f0ebe8 55%, #e8eaed 75%, #e6eaec);
}
.status .macro {
	margin-right: 15px;
}
.status > .sep {
	margin-right: 16px;
}
.views {
	display: flex;
	align-items: center;
	margin-left: auto;
}
.views > .bare {
	width: 41px;
	height: 29px;
}
.views > .focus {
	justify-content: flex-end;
	gap: 7px;
	width: 46px;
}
.views > .sep {
	margin: 0px 10px 0px 17px;
}
.views > .on {
	width: 30px;
	margin-right: 4px;
	border-radius: 5px;
	background-color: #d0d3d5;
}
.views > .sep ~ .sep {
	margin: 0px 20px 0px 4px;
}
.views > .zoom {
	appearance: none;
	width: 54px;
	border: none;
	background: none;
}
.views > .minus {
	width: 60px;
}
.slider {
	appearance: none;
	width: 132px;
	height: 12px;
	margin: 0px 5px 0px -5px;
	background: linear-gradient(90deg, #1f57dc 50%, #b4b6b9 50%) center / 100% 2px no-repeat;
}
.slider::-webkit-slider-thumb {
	appearance: none;
	width: 12px;
	height: 12px;
	border: 3px solid #fff;
	border-radius: 50%;
	background-color: #888;
	box-shadow: 0px 0px 2px #555;
}
.views > .full {
	justify-content: flex-end;
	width: 29px;
}

/* 任务栏 */
.taskbar {
	display: flex;
	flex: none;
	height: 50px;
	background: linear-gradient(90deg, #3a3f41, #3f4141 14%, #48403c 22%, #3c3f41 33%, #433d3a 55%, #3b3d3e 68%, #333a45 78%, #33383d);
	color: #fff;
}
.start, .app {
	display: flex;
	align-items: center;
	justify-content: center;
	width: 60px;
	border: none;
	background: none;
}
.start:nth-child(3) {
	margin-right: 3px;
}
.app {
	width: 51px;
	margin: 0px 6px 0px 5px;
	border-bottom: 3px solid #76b9ed;
}
.app.active {
	width: 61px;
	margin: 0px 1px 0px 0px;
	background-color: #666463;
}
.tray {
	display: flex;
	align-items: center;
	margin-left: auto;
	padding-right: 30px;
}
.tray > .ico {
	margin-right: 12px;
}
.ime {
	font-size: 19px;
}
.tray time {
	width: 124px;
	padding-right: 10px;
	font-size: 16px;
	line-height: 23px;
	text-align: center;
}
.notice {
	position: relative;
}
.notice b {
	position: absolute;
	top: 10px;
	left: 8px;
	width: 20px;
	height: 20px;
	border: 1px solid #999;
	border-radius: 50%;
	background-color: #333;
	font-size: 14px;
	line-height: 18px;
	text-align: center;
}

/* 对话框 */
.dialog {
	position: absolute;
	top: 237px;
	left: 435px;
	display: flex;
	flex-direction: column;
	width: 944px;
	border: 1px solid #666;
	background-color: #fff;
	color: #000;
	box-shadow: 0px 4px 20px 2px rgba(0, 0, 0, .35);
}
.caption {
	display: flex;
	align-items: center;
	gap: 5px;
	height: 36px;
	padding: 0px 14px 0px 9px;
}
.caption h1 {
	flex: 1;
	margin: 0px;
	font-size: 15px;
	font-weight: normal;
}
.navrow {
	display: flex;
	align-items: center;
	height: 52px;
	padding: 0px 12px 2px 16px;
	color: #707070;
}
.navrow > .bare:nth-child(1) {
	margin-right: 22px;
}
.navrow > .bare:nth-child(2) {
	margin-right: 17px;
}
.navrow > .bare:nth-child(3) {
	margin-right: 13px;
}
.navrow > .dim {
	color: #d8d8d8;
}
.address {
	display: flex;
	align-items: center;
	flex: 1;
	gap: 9px;
	height: 39px;
	margin: 0px 12px 0px 7px;
	padding-left: 6px;
	border: 1px solid #d9d9d9;
}
.crumb {
	border: none;
	background: none;
	color: #000;
}
.address .drop {
	width: 42px;
	height: 100%;
	margin: 0px -9px 0px auto;
	border-right: 1px solid #d9d9d9;
}
.address .reload {
	width: 42px;
}
.search {
	display: flex;
	align-items: center;
	width: 253px;
	height: 39px;
	padding: 0px 11px 0px 9px;
	border: 1px solid #d9d9d9;
}
.search input {
	flex: 1;
	min-width: 0px;
	border: none;
	outline: none;
}
.search input::placeholder {
	color: #707070;
}
.toolrow {
	display: flex;
	align-items: center;
	gap: 37px;
	height: 39px;
	padding: 0px 19px 0px 22px;
	border-bottom: 1px solid #e5e6e7;
	background-color: #f5f6f8;
	color: #1e395b;
}
.caret {
	width: 8px;
	margin-left: 5px;
	border: 4px solid transparent;
	border-top-color: #1e395b;
	border-bottom: none;
}
.toolrow .view {
	margin-left: auto;
	gap: 8px;
}
.help {
	width: 20px;
	height: 20px;
	border: 1px solid #0a4f96;
	border-radius: 50%;
	background-color: #0667c8;
	color: #fff;
	line-height: 18px;
}
.panes {
	display: flex;
	height: 362px;
}
.tree {
	width: 175px;
	margin: 0px 0px 2px;
	padding: 0px;
	overflow: hidden;
	list-style: none;
}
.tree li {
	display: flex;
	align-items: center;
	gap: 10px;
	height: 30px;
	margin-right: 1px;
	padding-left: 53px;
	overflow: hidden;
	white-space: nowrap;
}
.tree .top {
	gap: 6px;
	padding-left: 41px;
}
.tree .hid svg {
	opacity: .5;
}
.tree .sel {
	background-color: #d9d9d9;
}
.treebar, .listbar {
	display: flex;
	align-items: center;
	background-color: #f0f0f0;
	color: #606060;
}
.treebar {
	flex-direction: column;
	justify-content: space-between;
	width: 20px;
	padding: 4px 0px;
}
.treebar .thumb {
	width: 20px;
	height: 71px;
	margin: 201px 0px auto;
	background-color: #cdcdcd;
}
.listing {
	display: flex;
	flex-direction: column;
	justify-content: space-between;
	flex: 1;
	min-width: 0px;
	margin-left: 2px;
	border-left: 1px solid #f0f0f0;
}
.files {
	table-layout: fixed;
	width: 724px;
	margin-left: auto;
	border-spacing: 0px;
}
.files th {
	position: relative;
	height: 32px;
	padding: 0px 7px;
	color: #4c607a;
	font-weight: normal;
	text-align: left;
	border-right: 1px solid #e5e5e5;
}
.files th:first-child {
	padding-left: 3px;
}
.files th:last-child {
	border-right: none;
}
.files th .ico {
	position: absolute;
	top: -2px;
	left: 152px;
}
.c-name {
	width: 322px;
}
.c-date {
	width: 180px;
}
.c-type {
	width: 150px;
}
.files tbody::before {
	content: "";
	display: block;
	height: 8px;
}
.files td {
	height: 28px;
	padding: 0px 7px;
	border: solid #99d1ff;
	border-width: 1px 0px;
	background-color: #cce8ff;
	color: #6d6d6d;
}
.files td:first-child {
	border-left-width: 1px;
	color: #000;
}
.files .when {
	font-size: 16px;
}
.files td svg {
	display: inline-block;
	margin-right: 10px;
	vertical-align: middle;
}
.listbar {
	height: 20px;
	margin-left: 2px;
	padding: 0px 5px 1px 4px;
}
.listbar .thumb {
	flex: 1;
	height: 19px;
	margin: 0px 41px 0px 5px;
	background-color: #cdcdcd;
}
.confirm {
	position: relative;
	padding: 16px 23px 16px 168px;
	background-color: #f0f0f0;
}
.field {
	display: flex;
	align-items: center;
	gap: 8px;
}
.field input {
	flex: 1;
	height: 30px;
	padding: 0px 4px 3px;
	border: 1px solid #7a7a7a;
	background-color: #fff;
}
.buttons {
	display: flex;
	justify-content: flex-end;
	gap: 17px;
	margin-top: 8px;
	padding-right: 1px;
}
.ok, .cancel {
	width: 121px;
	height: 31px;
	border: 2px solid #0078d7;
	background-color: #e1e1e1;
}
.cancel {
	width: 108px;
	border: 1px solid #adadad;
}
.sizer {
	position: absolute;
	right: 3px;
	bottom: 2px;
}

/* 悬浮窗 */
.quark {
	position: absolute;
	top: 605px;
	right: 30px;
	display: flex;
	align-items: center;
	width: 155px;
	height: 45px;
	border: 1px solid #e9b13c;
	border-radius: 10px;
	background-color: #fff;
	overflow: hidden;
}
.q-icon {
	display: flex;
	align-items: center;
	justify-content: center;
	width: 50px;
	height: 100%;
	background: linear-gradient(45deg, #fff3d8, #ffd98a);
}
.q-name {
	flex: 1;
	font-size: 17px;
	font-weight: bold;
}
.q-bolt {
	position: absolute;
	right: 0px;
	bottom: 0px;
}
.hummer {
	position: absolute;
	top: 685px;
	right: 91px;
	border: none;
	background: none;
}
.mark {
	position: absolute;
	right: 4px;
	bottom: 10px;
	font-family: "Noto Sans CJK SC", sans-serif;
	font-weight: 300;
	font-size: 38px;
	line-height: 50px;
	color: rgba(255, 255, 255, .7);
	text-shadow: 1px 1px 1px #333;
}
```
